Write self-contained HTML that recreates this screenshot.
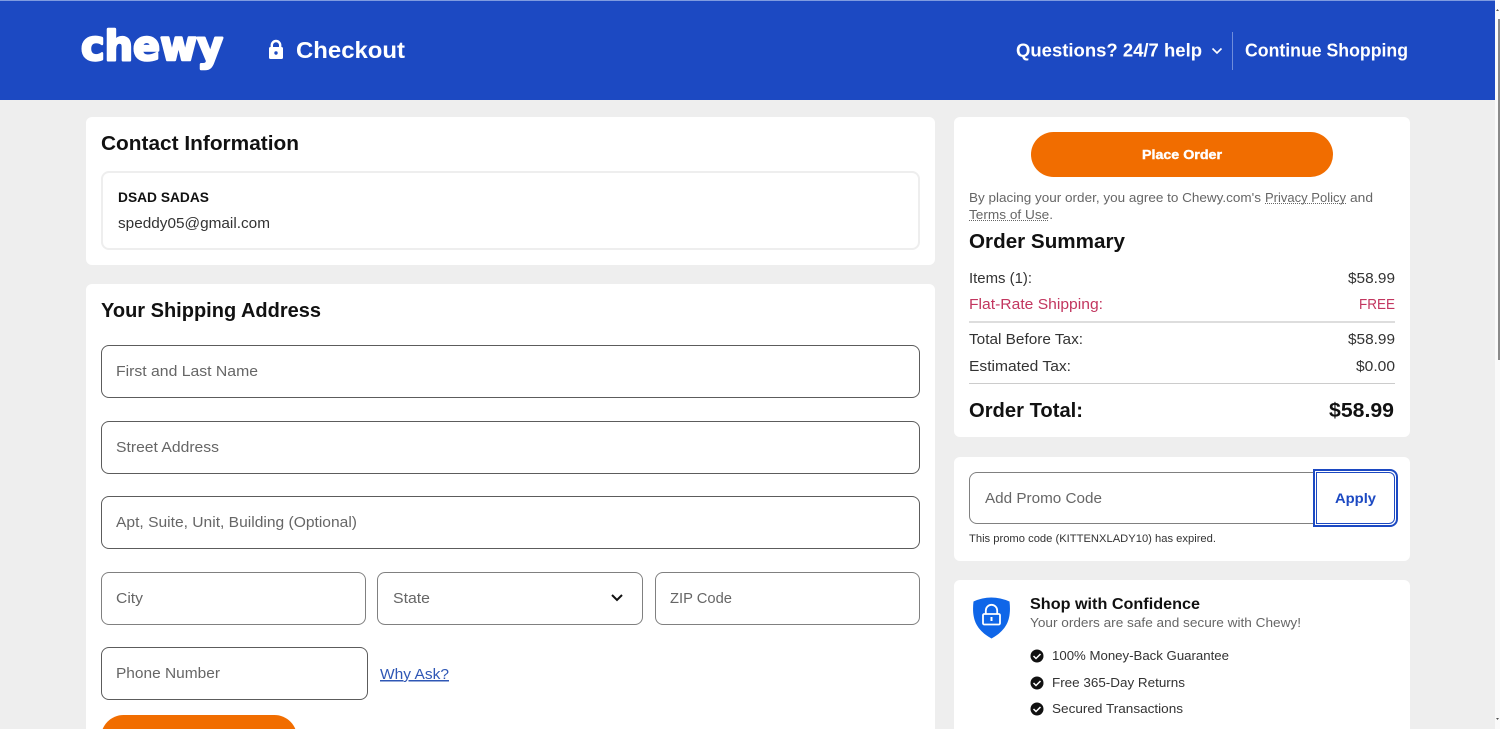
<!DOCTYPE html>
<html lang="en"><head><meta charset="utf-8"><title>Chewy Checkout</title>
<style>
html,body{margin:0;padding:0;width:1500px;height:729px;overflow:hidden;background:#eee;font-family:"Liberation Sans",sans-serif}
#w{position:relative;width:1500px;height:729px;overflow:hidden;background:#eee}
.a{position:absolute;box-sizing:border-box}
.card{background:#fff;border-radius:6px}
.in{background:#fff;border:1px solid #5c5c5c;border-radius:8px}
.l{border-color:#808080}
svg{position:absolute;left:0;top:0}
text{font-family:"Liberation Sans",sans-serif}
.b{font-weight:700;fill:#111}
.p{fill:#666;font-size:15px}
.t{fill:#333;font-size:15px}
.g{fill:#666;font-size:13px}
</style></head><body>
<div id="w">
<div class="a" style="left:0;top:0;width:1495px;height:100px;background:#1c49c2;border-top:1px solid #7f9be0"></div>
<div class="a" style="left:1495px;top:0;width:5px;height:729px;background:#fafafa"></div>
<div class="a" style="left:1498px;top:19px;width:2px;height:341px;background:#8a8a8a"></div>

<div class="a card" style="left:86px;top:117px;width:849px;height:148px"></div>
<div class="a" style="left:101px;top:171px;width:819px;height:79px;border:2px solid #eee;border-radius:8px;background:#fff"></div>
<div class="a card" style="left:86px;top:284px;width:849px;height:460px"></div>
<div class="a in" style="left:101px;top:345px;width:819px;height:53px"></div>
<div class="a in" style="left:101px;top:421px;width:819px;height:53px"></div>
<div class="a in" style="left:101px;top:496px;width:819px;height:53px"></div>
<div class="a in l" style="left:101px;top:572px;width:265px;height:53px"></div>
<div class="a in l" style="left:377px;top:572px;width:266px;height:53px"></div>
<div class="a in l" style="left:655px;top:572px;width:265px;height:53px"></div>
<div class="a in" style="left:101px;top:647px;width:267px;height:53px"></div>
<div class="a" style="left:101px;top:715px;width:196px;height:45px;background:#f16d00;border-radius:23px"></div>

<div class="a card" style="left:954px;top:117px;width:456px;height:320px"></div>
<div class="a" style="left:1031px;top:132px;width:302px;height:45px;background:#f16d00;border-radius:23px"></div>
<div class="a" style="left:969px;top:321px;width:426px;height:2px;background:#ddd"></div>
<div class="a" style="left:969px;top:383px;width:426px;height:1px;background:#ccc"></div>
<div class="a card" style="left:954px;top:457px;width:456px;height:104px"></div>
<div class="a" style="left:969px;top:472px;width:350px;height:52px;background:#fff;border:1px solid #808080;border-radius:8px 0 0 8px"></div>
<div class="a" style="left:1313px;top:469px;width:85px;height:58px;background:#fff;border:2px solid #1c49c2;border-radius:0 8px 8px 0"></div>
<div class="a" style="left:1316px;top:472px;width:79px;height:52px;background:#fff;border:1px solid #1c49c2;border-radius:0 6px 6px 0"></div>
<div class="a card" style="left:954px;top:580px;width:456px;height:170px"></div>

<svg width="1500" height="729" viewBox="0 0 1500 729" xmlns="http://www.w3.org/2000/svg">
<path d="M1496 11l1.500-2 1.500 2z" fill="#555"/>
<path d="M1496 718l1.500 2 1.500-2z" fill="#555"/>

<text x="81" y="60" style="font-family:'DejaVu Sans',sans-serif" font-size="41" font-weight="700" fill="#fff" stroke="#fff" stroke-width="2.500" stroke-linejoin="round" textLength="142" lengthAdjust="spacingAndGlyphs">chewy</text>

<rect x="269" y="47" width="14" height="12" rx="1.500" fill="#fff"/>
<path d="M271.800 47.500v-2.300a4.200 4.200 0 0 1 8.400 0v2.300" fill="none" stroke="#fff" stroke-width="2.400"/>
<circle cx="276" cy="53" r="1.700" fill="#1c49c2"/>
<text x="296" y="58" font-size="23" font-weight="700" fill="#fff" textLength="109" lengthAdjust="spacingAndGlyphs">Checkout</text>
<text x="1016" y="56.500" font-size="18" font-weight="700" fill="#fff" textLength="186" lengthAdjust="spacingAndGlyphs">Questions? 24/7 help</text>
<path d="M1212.500 48.500l4.500 4.500 4.500-4.500" fill="none" stroke="#fff" stroke-width="1.600"/>
<rect x="1232" y="32" width="1" height="38" fill="#6f8ddb"/>
<text x="1245" y="56.500" font-size="18" font-weight="700" fill="#fff" textLength="163" lengthAdjust="spacingAndGlyphs">Continue Shopping</text>

<text class="b" x="101" y="150" font-size="20" textLength="198" lengthAdjust="spacingAndGlyphs">Contact Information</text>
<text class="b" x="118" y="202" font-size="14" textLength="91" lengthAdjust="spacingAndGlyphs">DSAD SADAS</text>
<text class="t" x="118" y="228" textLength="152" lengthAdjust="spacingAndGlyphs">speddy05@gmail.com</text>
<text class="b" x="101" y="317" font-size="20" textLength="220" lengthAdjust="spacingAndGlyphs">Your Shipping Address</text>

<text class="p" x="116" y="376" textLength="142" lengthAdjust="spacingAndGlyphs">First and Last Name</text>
<text class="p" x="116" y="452" textLength="103" lengthAdjust="spacingAndGlyphs">Street Address</text>
<text class="p" x="116" y="527" textLength="241" lengthAdjust="spacingAndGlyphs">Apt, Suite, Unit, Building (Optional)</text>
<text class="p" x="116" y="603" textLength="27" lengthAdjust="spacingAndGlyphs">City</text>
<text class="p" x="393" y="603" textLength="37" lengthAdjust="spacingAndGlyphs">State</text>
<path d="M612 595l5 5 5-5" fill="none" stroke="#111" stroke-width="2"/>
<text class="p" x="670" y="603" textLength="62" lengthAdjust="spacingAndGlyphs">ZIP Code</text>
<text class="p" x="116" y="678" textLength="104" lengthAdjust="spacingAndGlyphs">Phone Number</text>
<text x="380" y="679" font-size="15" fill="#2f57b5" text-decoration="underline" textLength="69" lengthAdjust="spacingAndGlyphs">Why Ask?</text>

<text x="1142" y="159" font-size="13" font-weight="700" fill="#fff" stroke="#fff" stroke-width=".4" textLength="80" lengthAdjust="spacingAndGlyphs">Place Order</text>
<text class="g" x="969" y="202" textLength="292" lengthAdjust="spacingAndGlyphs">By placing your order, you agree to Chewy.com's</text>
<text class="g" x="1265" y="202" textLength="81" lengthAdjust="spacingAndGlyphs">Privacy Policy</text>
<text class="g" x="1350" y="202" textLength="23" lengthAdjust="spacingAndGlyphs">and</text>
<path d="M1265 203.500h81" stroke="#666" stroke-width="1" stroke-dasharray="1 1"/>
<text class="g" x="969" y="219" textLength="84" lengthAdjust="spacingAndGlyphs">Terms of Use.</text>
<path d="M969 220.500h80" stroke="#666" stroke-width="1" stroke-dasharray="1 1"/>
<text class="b" x="969" y="248" font-size="20" textLength="156" lengthAdjust="spacingAndGlyphs">Order Summary</text>

<text class="t" x="969" y="283" textLength="63" lengthAdjust="spacingAndGlyphs">Items (1):</text>
<text class="t" x="1348" y="283" textLength="47" lengthAdjust="spacingAndGlyphs">$58.99</text>
<text x="969" y="309" font-size="15" fill="#c2365f" textLength="134" lengthAdjust="spacingAndGlyphs">Flat-Rate Shipping:</text>
<text x="1359" y="309" font-size="15" fill="#c2365f" textLength="36" lengthAdjust="spacingAndGlyphs">FREE</text>
<text class="t" x="969" y="344" textLength="114" lengthAdjust="spacingAndGlyphs">Total Before Tax:</text>
<text class="t" x="1348" y="344" textLength="47" lengthAdjust="spacingAndGlyphs">$58.99</text>
<text class="t" x="969" y="371" textLength="102" lengthAdjust="spacingAndGlyphs">Estimated Tax:</text>
<text class="t" x="1356" y="371" textLength="39" lengthAdjust="spacingAndGlyphs">$0.00</text>
<text class="b" x="969" y="417" font-size="20" textLength="114" lengthAdjust="spacingAndGlyphs">Order Total:</text>
<text class="b" x="1329" y="417" font-size="20" textLength="65" lengthAdjust="spacingAndGlyphs">$58.99</text>

<text class="p" x="985" y="503" textLength="117" lengthAdjust="spacingAndGlyphs">Add Promo Code</text>
<text x="1335" y="503" font-size="14" font-weight="700" fill="#1c49c2" textLength="41" lengthAdjust="spacingAndGlyphs">Apply</text>
<text x="969" y="542" font-size="11" fill="#333" textLength="247" lengthAdjust="spacingAndGlyphs">This promo code (KITTENXLADY10) has expired.</text>

<path d="M973.500 601.500Q991 593.500 1009.500 601.500C1010.500 610 1010 618 1006.500 624.500C1003 631 997 635.500 991.500 638.500C986 635.500 980 631 976.500 624.500C973 618 972.500 610 973.500 601.500z" fill="#0f66e8"/>
<rect x="983" y="614" width="17" height="10.500" rx="1.200" fill="none" stroke="#fff" stroke-width="1.800"/>
<path d="M985.800 614v-3.500a5.700 5.700 0 0 1 11.400 0v3.500" fill="none" stroke="#fff" stroke-width="1.800"/>
<rect x="990.500" y="617" width="2" height="4" fill="#fff"/>
<text class="b" x="1030" y="609" font-size="16" textLength="170" lengthAdjust="spacingAndGlyphs">Shop with Confidence</text>
<text class="g" x="1030" y="627" textLength="271" lengthAdjust="spacingAndGlyphs">Your orders are safe and secure with Chewy!</text>

<circle cx="1037" cy="656" r="6.500" fill="#111"/><path d="M1033.500 656l2.500 2.500 4.500-4.500" fill="none" stroke="#fff" stroke-width="1.500"/>
<text x="1052" y="660" font-size="13" fill="#333" textLength="177" lengthAdjust="spacingAndGlyphs">100% Money-Back Guarantee</text>
<circle cx="1037" cy="683" r="6.500" fill="#111"/><path d="M1033.500 683l2.500 2.500 4.500-4.500" fill="none" stroke="#fff" stroke-width="1.500"/>
<text x="1052" y="687" font-size="13" fill="#333" textLength="133" lengthAdjust="spacingAndGlyphs">Free 365-Day Returns</text>
<circle cx="1037" cy="709" r="6.500" fill="#111"/><path d="M1033.500 709l2.500 2.500 4.500-4.500" fill="none" stroke="#fff" stroke-width="1.500"/>
<text x="1052" y="713" font-size="13" fill="#333" textLength="131" lengthAdjust="spacingAndGlyphs">Secured Transactions</text>
</svg>
</div>
</body></html>
